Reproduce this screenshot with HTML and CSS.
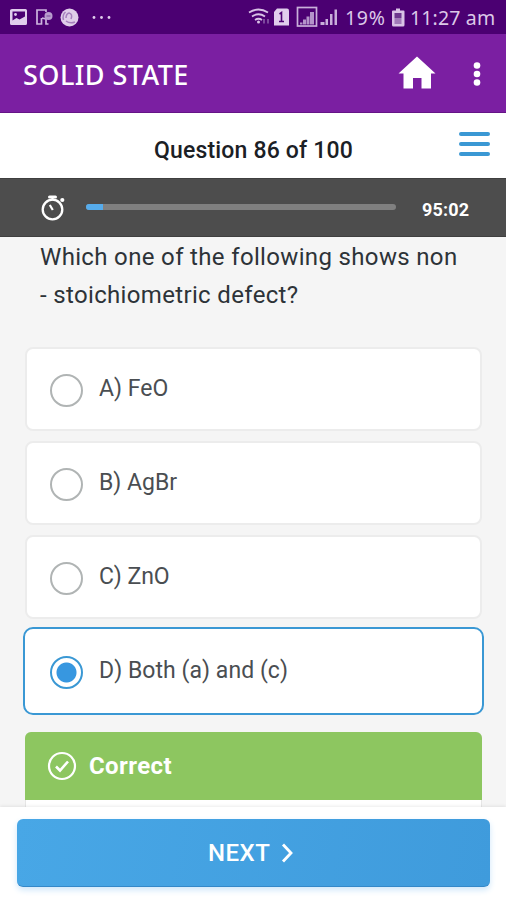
FILE: index.html
```html
<!DOCTYPE html>
<html lang="en">
<head>
<meta charset="utf-8">
<title>Solid State</title>
<link rel="stylesheet" href="styles.css">
</head>
<body>
<div class="screen">
  <div class="status">
    <svg class="status-left" width="116" height="34" viewBox="0 0 116 34">
      <path fill="#e0cdec" fill-rule="evenodd" d="M12 9h13.500q1.500 0 1.500 1.500v13q0 1.500-1.500 1.500H11.500q-1.500 0-1.500-1.500v-13Q10 9 12 9zM12.500 11.500v9l4-2.500 3 1.500 5.500-3v-5z"/>
      <circle cx="15.500" cy="14.500" r="1.400" fill="#e0cdec"/>
      <path fill="none" stroke="#cdb4df" stroke-width="1.700" d="M46 12V10H37v14H41.500v-6M42 18l4 1v5h2.500"/>
      <circle cx="48.500" cy="16" r="4" fill="#b99dce"/>
      <path fill="none" stroke="#7d4c9e" d="M46.500 16h4"/>
      <circle cx="69.500" cy="17.500" r="9" fill="#dfcde9"/>
      <path fill="none" stroke="#a580bd" stroke-width="1.500" d="M63.500 20q-1.500-5 2-8M66 18q0-4 3-5 4 1 2 6M66 21q4 3 9 1"/>
      <g fill="#e0cdec"><circle cx="94" cy="17.500" r="1.400"/><circle cx="101.500" cy="17.500" r="1.400"/><circle cx="109" cy="17.500" r="1.400"/></g>
    </svg>
    <div class="status-right">
      <svg width="90" height="34" viewBox="249 0 90 34">
        <g fill="none" stroke="#d9c2e6" stroke-width="1.800"><path d="M250 12.500q9.500-6 19 0M253 16.500q6.500-4.500 13 0M256 20q3.500-2.500 7 0"/></g>
        <circle cx="259.500" cy="22" r="1.500" fill="#d9c2e6"/>
        <path d="M265 19v4.500M269 23.500V19" stroke="#8d60ab" stroke-width="1.500" fill="none"/>
        <path d="M278 8.500h10q2 0 2 2v15h-15V12z" fill="#e0cdec"/>
        <path d="M280.500 14l2-1.500v9M280 21.500h5" stroke="#4b0072" stroke-width="1.600" fill="none"/>
        <rect x="298.500" y="7.500" width="19" height="18.500" fill="none" stroke="#c9afdb" stroke-width="1.700"/>
        <path d="M301 24.500v-2h2.500v2zM304 24.500v-5h3v5zM307.500 24.500v-8h3v8zM311 24.500V12h4v12.500z" fill="#b493ca"/>
        <path d="M321.500 25v-3h4v3zM326.500 25v-6h2.500v6zM331 25V14h2.500v11zM335.500 25V9.500h2.500V25z" fill="#c9afdb"/>
      </svg>
      <span class="pct">19%</span>
      <svg width="14" height="34" viewBox="391 0 14 34"><path fill="#d9c2e6" d="M396 8.500h4v2h3.500q1 0 1 1V25q0 1.500-1.500 1.500h-9.500q-1.500 0-1.500-1.500V11.500q0-1 1-1h3z"/><path fill="#6d368e" d="M394.500 13h7v5h-7z"/><path fill="#a17ab9" d="M394.500 18h7v6h-7z"/></svg>
      <span class="time">11:27 am</span>
    </div>
  </div>
  <header class="appbar">
    <h1>SOLID STATE</h1>
    <svg width="38" height="34" viewBox="0 0 38 34"><path fill="#fff" d="M19 0.500L37.500 17.500H33V32.500H23.500V22H15V32.500H5.500V17.500H0.500z"/></svg>
    <svg class="dots" width="8" height="26" viewBox="0 0 8 26"><g fill="#fff"><circle cx="4" cy="4.500" r="3.300"/><circle cx="4" cy="13" r="3.300"/><circle cx="4" cy="21.500" r="3.300"/></g></svg>
  </header>
  <div class="counter">
    <div class="counter-text">Question 86 of 100</div>
    <div class="menu"><i></i><i></i><i></i></div>
  </div>
  <div class="timer">
    <svg width="26" height="28" viewBox="0 0 26 28"><g fill="none" stroke="#fff"><circle cx="12.500" cy="15.500" r="9.800" stroke-width="2.300"/><path stroke-width="3" stroke-linecap="round" d="M9.500 3h6"/><path stroke-width="2.200" d="M12.500 4v2.500M9.800 11l3 5"/></g><circle cx="22.300" cy="6" r="2.100" fill="#fff"/></svg>
    <div class="track"><div class="fill"></div></div>
    <span class="left">95:02</span>
  </div>
  <main>
    <p class="question">Which one of the following shows non<br>- stoichiometric defect?</p>
    <div class="options">
      <div class="option"><span class="radio"></span><span class="label">A) FeO</span></div>
      <div class="option"><span class="radio"></span><span class="label">B) AgBr</span></div>
      <div class="option"><span class="radio"></span><span class="label">C) ZnO</span></div>
      <div class="option selected"><span class="radio"></span><span class="label">D) Both (a) and (c)</span></div>
    </div>
    <section class="result">
      <div class="result-head">
        <svg width="30" height="30" viewBox="0 0 30 30"><g fill="none" stroke="#fff" stroke-width="2.200"><circle cx="15" cy="15" r="13"/><path stroke-width="2.600" d="M9 15.500l4 4L21 10.500"/></g></svg>
        <span>Correct</span>
      </div>
    </section>
  </main>
  <footer>
    <div class="next"><span>NEXT</span><svg width="13" height="20" viewBox="0 0 13 20"><path fill="none" stroke="#fff" stroke-width="2.800" d="M2 1.500L10 10 2 18.500"/></svg></div>
  </footer>
</div>
</body>
</html>
```
FILE: styles.css
```css
* { box-sizing: border-box; }
body { margin: 0; font-family: Roboto, "Liberation Sans", sans-serif; }
.screen { width: 506px; height: 900px; overflow: hidden; display: flex; flex-direction: column; background: #f5f5f5; }
.status { height: 34px; flex: none; background: #4b0072; display: flex; justify-content: space-between; }
.status-right { display: flex; align-items: center; padding-right: 11px; color: #dcc8e8; font: 19.500px/34px "Noto Sans", sans-serif; white-space: nowrap; }
.pct { width: 41px; margin: 1px 5px 0 7px; letter-spacing: 0.7px; }
.time { width: 85px; margin: 1px 0 0 5px; letter-spacing: 0.15px; }
.appbar { height: 79px; flex: none; background: #7b1fa2; border-bottom: 1px solid #651486; display: flex; align-items: center; padding: 0 26px 0 23px; }
.appbar h1 { margin: 3px 0 0; flex: 1; color: #fff; font: 500 27px/36px "Noto Sans", sans-serif; letter-spacing: 0.45px; white-space: nowrap; }
.appbar svg { position: relative; left: 1px; }
.dots { margin-left: 37px; margin-top: 1px; }
.counter { height: 65px; flex: none; background: #fff; display: grid; grid-template-columns: 60px 1fr 60px; }
.counter-text { grid-column: 2; text-align: center; font-weight: 500; font-size: 23px; line-height: 30px; letter-spacing: 0.17px; padding: 23px 0 0 1px; color: #1b2025; white-space: nowrap; }
.menu { padding: 19px 0 0 13px; display: flex; flex-direction: column; gap: 6px; }
.menu i { width: 31px; height: 4px; border-radius: 2px; background: #3a98d4; }
.timer { height: 59px; flex: none; background: #4d4d4d; border-top: 1px solid #3f3f3f; border-bottom: 1px solid #3f3f3f; display: flex; align-items: center; padding-left: 40px; }
.track { width: 310px; height: 6px; margin: -1px 0 0 20px; background: #808080; border-radius: 3px; }
.fill { width: 17px; height: 6px; background: #56acec; border-radius: 3px 0 0 3px; }
.left { margin: 4px 0 0 26px; color: #fff; font-weight: 700; font-size: 18px; letter-spacing: 0.2px; }
main { flex: 1; min-height: 0; overflow: hidden; }
.question { margin: 0 0 0 40px; font-size: 24px; line-height: 38px; letter-spacing: 0.34px; color: #2d3338; white-space: nowrap; position: relative; top: 1px; }
.options { margin: 34px 22px 0 23px; }
.option { height: 84px; margin: 0 2px 10px; background: #fff; border: 2px solid #ececec; border-radius: 8px; display: flex; align-items: center; padding-left: 23px; }
.radio { width: 33px; height: 33px; margin-top: 2px; border: 2.500px solid #b0b4b4; border-radius: 50%; }
.label { margin-left: 16px; margin-top: -1px; font-size: 23px; line-height: 30px; color: #4a4e52; white-space: nowrap; }
.option.selected { height: 88px; margin: -2px 0 17px; border: 2px solid #3a98d4; border-radius: 10px; padding-left: 25px; }
.selected .radio { border-color: #3a98d4; background: radial-gradient(circle, #3797e0 0 9.500px, #fff 10.500px); }
.selected .label { letter-spacing: 0.05px; }
.result { margin: 0 24px 0 25px; height: 100px; background: #fff; border: 1px solid #e6e6e6; border-radius: 6px; }
.result-head { margin: -1px; height: 68px; background: #8dc660; border-radius: 6px 6px 0 0; display: flex; align-items: center; padding-left: 22px; }
.result-head span { margin-left: 12px; color: #fff; font-weight: 700; font-size: 24px; letter-spacing: 0.4px; }
footer { height: 93px; flex: none; background: #fff; box-shadow: 0 -1px 3px rgba(0,0,0,.08); padding: 12px 16px 0 17px; position: relative; }
.next { height: 68px; border-radius: 6px; background: linear-gradient(100deg, #48a7e6, #3f9bdc); border-bottom: 1px solid #3488c8; box-shadow: 0 3px 6px #cfe7fa; display: flex; align-items: center; padding: 1px 0 0 191px; color: #fff; font-weight: 500; font-size: 24px; letter-spacing: 0.5px; }
.next svg { margin-left: 11px; }
```
